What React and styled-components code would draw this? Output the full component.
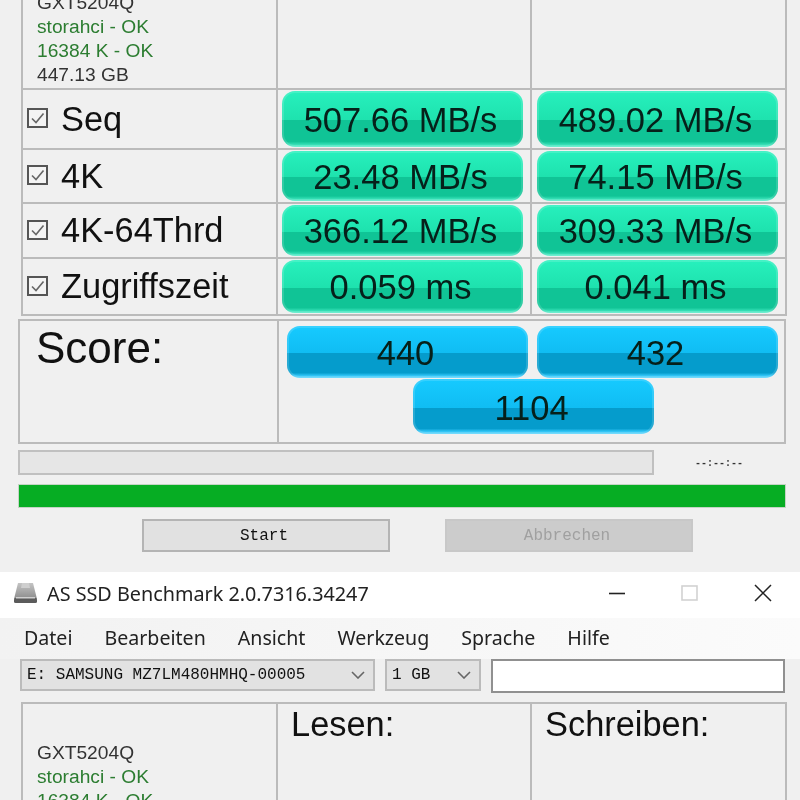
import React from 'react';
import styled, { createGlobalStyle } from 'styled-components';

const results = [
    { name: 'Seq', read: '507.66 MB/s', write: '489.02 MB/s', height: 60 },
    { name: '4K', read: '23.48 MB/s', write: '74.15 MB/s', height: 54 },
    { name: '4K-64Thrd', read: '366.12 MB/s', write: '309.33 MB/s', height: 55 },
    { name: 'Zugriffszeit', read: '0.059 ms', write: '0.041 ms', height: 57 },
];

const menuItems = ['Datei', 'Bearbeiten', 'Ansicht', 'Werkzeug', 'Sprache', 'Hilfe'];

function DriveInfo({ clipped }) {
    return (
        <InfoCell $clipped={clipped}>
            <InfoLine>GXT5204Q</InfoLine>
            <InfoLine $ok>storahci - OK</InfoLine>
            <InfoLine $ok>16384 K - OK</InfoLine>
            <InfoLine>447.13 GB</InfoLine>
        </InfoCell>
    );
}

function CheckIcon() {
    return (
        <CheckBox viewBox="0 0 21 20">
            <rect x="1" y="1" width="19" height="18" fill="#f4f4f4" stroke="#555" strokeWidth="2" />
            <path d="M5 10.5 L9 14.5 L16.5 5.5" fill="none" stroke="#666" strokeWidth="1.6" />
        </CheckBox>
    );
}

function DriveIcon() {
    return (
        <svg width="25" height="22" viewBox="0 0 25 22">
            <defs>
                <linearGradient id="driveBody" x1="0" y1="0" x2="0" y2="1">
                    <stop offset="0" stopColor="#c4c4c4" />
                    <stop offset="1" stopColor="#8c8c8c" />
                </linearGradient>
            </defs>
            <path d="M5 1 H20 L24 17 H1 Z" fill="url(#driveBody)" />
            <path d="M9 1 H16 L17 6 H8 Z" fill="#cfcfcf" />
            <rect x="1" y="16" width="23" height="5" rx="1.5" fill="#5b5b5b" />
            <rect x="3" y="15" width="19" height="1.5" fill="#d0d0d0" />
        </svg>
    );
}

function Chevron() {
    return (
        <ChevronIcon viewBox="0 0 14 8">
            <path d="M1 1 L7 7 L13 1" fill="none" stroke="#666" strokeWidth="1.6" />
        </ChevronIcon>
    );
}

function ResultsTable() {
    return (
        <ResultGrid>
            <DriveInfo clipped />
            <EmptyCell />
            <EmptyCell />
            {results.map(row => (
                <React.Fragment key={row.name}>
                    <LabelCell $height={row.height}>
                        <CheckIcon />
                        <RowName>{row.name}</RowName>
                    </LabelCell>
                    <BarCell $height={row.height}>
                        <Bar>{row.read}</Bar>
                    </BarCell>
                    <BarCell $height={row.height} $right>
                        <Bar>{row.write}</Bar>
                    </BarCell>
                </React.Fragment>
            ))}
        </ResultGrid>
    );
}

function App() {
    return (
        <Page>
            <GlobalStyle />
            <ResultsTable />

            <ScorePanel>
                <ScoreLabel>Score:</ScoreLabel>
                <ScoreBars>
                    <ScorePair>
                        <Bar $blue>440</Bar>
                        <Bar $blue>432</Bar>
                    </ScorePair>
                    <TotalBar $blue>1104</TotalBar>
                </ScoreBars>
            </ScorePanel>

            <ProgressRow>
                <ProgressTrack />
                <TimeText>--:--:--</TimeText>
            </ProgressRow>
            <GreenBar />

            <ButtonRow>
                <ActionButton>Start</ActionButton>
                <ActionButton $disabled>Abbrechen</ActionButton>
            </ButtonRow>

            <TitleBar>
                <TitleLeft>
                    <DriveIcon />
                    <TitleText>AS SSD Benchmark 2.0.7316.34247</TitleText>
                </TitleLeft>
                <WindowControls>
                    <svg width="18" height="18" viewBox="0 0 18 18">
                        <path d="M1 9.5 H17" stroke="#222" strokeWidth="1.6" />
                    </svg>
                    <svg width="18" height="18" viewBox="0 0 18 18">
                        <rect x="1" y="2" width="15" height="14" fill="none" stroke="#d2d2d2" strokeWidth="1.6" />
                    </svg>
                    <svg width="18" height="18" viewBox="0 0 18 18">
                        <path d="M1 1 L17 17 M17 1 L1 17" stroke="#222" strokeWidth="1.5" />
                    </svg>
                </WindowControls>
            </TitleBar>

            <MenuBar>
                {menuItems.map(item => <MenuItem key={item}>{item}</MenuItem>)}
            </MenuBar>

            <Toolbar>
                <Combo $width={355}>
                    <span>E: SAMSUNG MZ7LM480HMHQ-00005</span>
                    <Chevron />
                </Combo>
                <Combo $width={96}>
                    <span>1 GB</span>
                    <Chevron />
                </Combo>
                <PathInput />
            </Toolbar>

            <LowerGrid>
                <DriveInfo />
                <HeadCell>Lesen:</HeadCell>
                <HeadCell $right>Schreiben:</HeadCell>
            </LowerGrid>
        </Page>
    );
}

const GlobalStyle = createGlobalStyle`
    html, body {
        margin: 0;
        padding: 0;
        background: #f0f0f0;
    }
    body {
        font-family: "Liberation Sans", Arial, sans-serif;
        overflow: hidden;
    }
`;

const Page = styled.div`
    width: 800px;
    height: 800px;
    overflow: hidden;
    background: #f0f0f0;
    color: #111;
    filter: blur(0.4px);
`;

const ResultGrid = styled.div`
    display: grid;
    grid-template-columns: 255px 254px 255px;
    width: 764px;
    margin-left: 21px;
    border-right: 2px solid #bbb;
    border-bottom: 2px solid #bbb;
    box-sizing: content-box;
`;

const InfoCell = styled.div`
    display: flex;
    flex-direction: column;
    justify-content: flex-end;
    height: ${props => props.$clipped ? '88px' : 'auto'};
    padding: ${props => props.$clipped ? '0 0 1px 14px' : '37px 0 0 14px'};
    box-sizing: border-box;
    border-left: 2px solid #bbb;
    overflow: hidden;
`;

const InfoLine = styled.div`
    flex: none;
    height: 24px;
    line-height: 24px;
    font-size: 19.2px;
    white-space: nowrap;
    color: ${props => props.$ok ? '#2c7d31' : '#333'};
`;

const EmptyCell = styled.div`
    border-left: 2px solid #bbb;
`;

const LabelCell = styled.div`
    display: flex;
    align-items: center;
    gap: 13px;
    height: ${props => props.$height}px;
    padding-left: 4px;
    box-sizing: border-box;
    border-left: 2px solid #bbb;
    border-top: 2px solid #bbb;
`;

const CheckBox = styled.svg`
    width: 21px;
    height: 20px;
    margin-bottom: 2px;
    flex: none;
`;

const RowName = styled.span`
    font-size: 34.4px;
    line-height: 1;
    white-space: nowrap;
`;

const BarCell = styled.div`
    display: flex;
    height: ${props => props.$height}px;
    padding: 1px 0 1px ${props => props.$right ? '5px' : '4px'};
    box-sizing: border-box;
    border-left: 2px solid #bbb;
    border-top: 2px solid #bbb;
`;

const Bar = styled.div`
    display: flex;
    align-items: center;
    justify-content: center;
    flex: none;
    width: 241px;
    height: ${props => props.$blue ? '52px' : 'auto'};
    padding: 2px 4px 0 0;
    box-sizing: border-box;
    border-radius: 13px;
    font-size: 34.5px;
    color: #06201a;
    background: ${props => props.$blue
        ? 'linear-gradient(#16caff 0%, #10bdf3 52%, #059ccc 52%, #059ccc 90%, #2cc2f4 95%, #62d8ff 100%)'
        : 'linear-gradient(#27f0bd 0%, #1ee2ae 52%, #10c496 52%, #10c496 90%, #30dcb2 95%, #5cf0cd 100%)'};
    box-shadow: inset 0 0 0 2px rgba(255, 255, 255, 0.14);
`;

const ScorePanel = styled.div`
    display: grid;
    grid-template-columns: 257px 1fr;
    width: 768px;
    height: 125px;
    margin: 3px 0 0 18px;
    box-sizing: border-box;
    border: 2px solid #bbb;
`;

const ScoreLabel = styled.div`
    padding: 2px 0 0 16px;
    font-size: 44px;
    line-height: 50px;
`;

const ScoreBars = styled.div`
    display: flex;
    flex-direction: column;
    align-items: center;
    padding: 5px 0 0 2px;
    border-left: 2px solid #bbb;
`;

const ScorePair = styled.div`
    display: flex;
    gap: 9px;
    margin-bottom: 1px;
`;

const TotalBar = styled(Bar)`
    height: 55px;
    margin-left: 2px;
    padding-top: 4px;
`;

const ProgressRow = styled.div`
    display: flex;
    align-items: center;
    margin: 6px 0 0 18px;
`;

const ProgressTrack = styled.div`
    width: 636px;
    height: 25px;
    box-sizing: border-box;
    background: #e6e6e6;
    border: 2px solid #c0c0c0;
`;

const TimeText = styled.div`
    margin: 1px 0 0 41px;
    font-family: "Liberation Mono", monospace;
    font-size: 10px;
    font-weight: bold;
    color: #333;
`;

const GreenBar = styled.div`
    width: 768px;
    height: 24px;
    margin: 9px 0 0 18px;
    box-sizing: border-box;
    background: #06ad23;
    border: 1px solid #c4d4c4;
`;

const ButtonRow = styled.div`
    display: flex;
    gap: 55px;
    margin: 11px 0 0 142px;
`;

const ActionButton = styled.div`
    display: flex;
    align-items: center;
    justify-content: center;
    width: 248px;
    height: 33px;
    padding-right: 4px;
    box-sizing: border-box;
    font-family: "Liberation Mono", monospace;
    font-size: 16px;
    background: ${props => props.$disabled ? '#cccccc' : '#e1e1e1'};
    border: 2px solid ${props => props.$disabled ? '#c8c8c8' : '#b4b4b4'};
    color: ${props => props.$disabled ? '#a0a0a0' : '#111'};
`;

const TitleBar = styled.div`
    display: flex;
    align-items: center;
    justify-content: space-between;
    height: 46px;
    margin-top: 20px;
    padding: 0 28px 4px 13px;
    box-sizing: border-box;
    background: #fff;
`;

const TitleLeft = styled.div`
    display: flex;
    align-items: center;
    gap: 9px;
`;

const TitleText = styled.span`
    font-family: "Noto Sans", sans-serif;
    font-size: 19.8px;
    color: #222;
`;

const WindowControls = styled.div`
    display: flex;
    align-items: center;
    gap: 55px;
`;

const MenuBar = styled.div`
    display: flex;
    align-items: center;
    gap: 32px;
    height: 41px;
    padding: 0 0 2px 24px;
    box-sizing: border-box;
    background: linear-gradient(to right, #f2f2f2, #fbfbfb);
`;

const MenuItem = styled.span`
    font-family: "Noto Sans", sans-serif;
    font-size: 19.6px;
    color: #222;
`;

const Toolbar = styled.div`
    display: flex;
    align-items: flex-start;
    gap: 10px;
    padding-left: 20px;
`;

const Combo = styled.div`
    display: flex;
    align-items: center;
    justify-content: space-between;
    width: ${props => props.$width}px;
    height: 32px;
    padding: 0 8px 0 5px;
    box-sizing: border-box;
    font-family: "Liberation Mono", monospace;
    font-size: 16px;
    white-space: nowrap;
    background: #e2e2e2;
    border: 2px solid #bbb;
`;

const ChevronIcon = styled.svg`
    width: 14px;
    height: 8px;
    flex: none;
`;

const PathInput = styled.div`
    width: 294px;
    height: 34px;
    box-sizing: border-box;
    background: #fff;
    border: 2px solid #909090;
`;

const LowerGrid = styled.div`
    display: grid;
    grid-template-columns: 255px 254px 255px;
    width: 764px;
    margin: 9px 0 0 21px;
    border-right: 2px solid #bbb;
    border-top: 2px solid #bbb;
`;

const HeadCell = styled.div`
    height: 100px;
    padding-left: 13px;
    font-size: 34.4px;
    line-height: 40px;
    border-left: 2px solid #bbb;
`;

export default App;
